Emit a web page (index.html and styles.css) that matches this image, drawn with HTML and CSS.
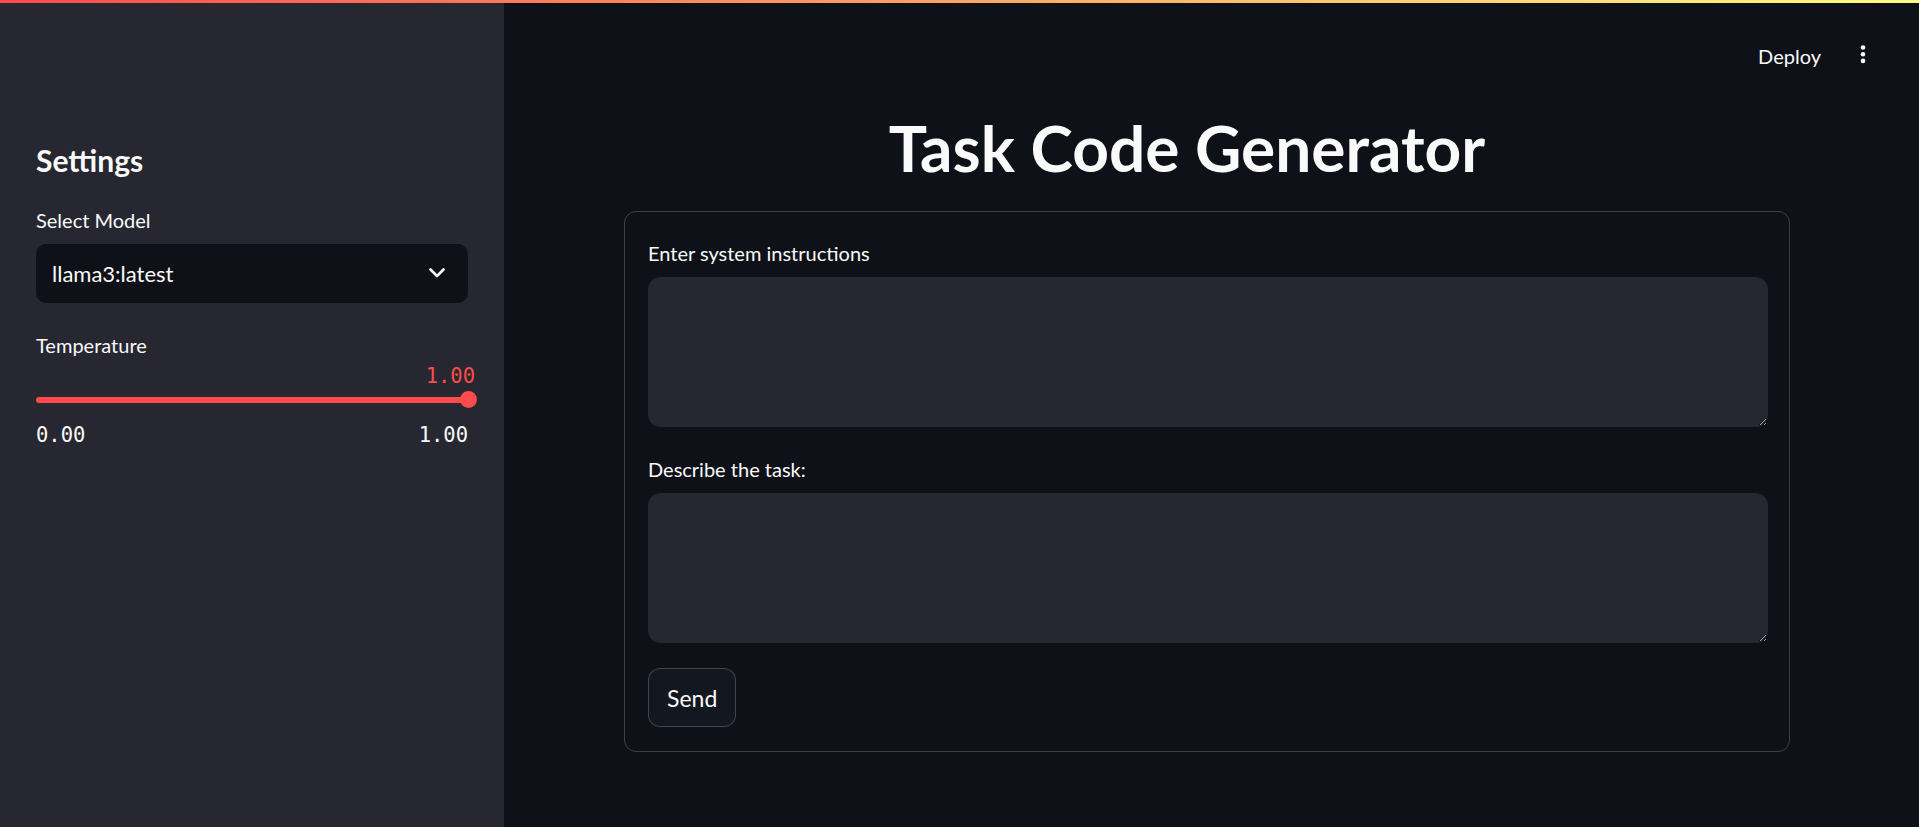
FILE: index.html
```html
<!DOCTYPE html>
<html lang="en">
<head>
<meta charset="utf-8">
<title>Task Code Generator</title>
<link rel="stylesheet" href="styles.css">
</head>
<body>
<div class="decoration"></div>
<div class="app">
  <aside class="sidebar">
    <h2 class="side-title">Settings</h2>
    <div class="widget side-widget">
      <div class="label">Select Model</div>
      <div class="select">
        <span>llama3:latest</span>
        <svg class="chevron" width="16" height="10" viewBox="0 0 16 10"><polyline points="1.5,1.5 8,8 14.5,1.5" fill="none" stroke="#fafafa" stroke-width="2.6" stroke-linecap="round" stroke-linejoin="round"/></svg>
      </div>
    </div>
    <div class="widget side-widget slider">
      <div class="label label-tight">Temperature</div>
      <div class="slider-value">1.00</div>
      <div class="track-area">
        <div class="track"></div>
        <div class="thumb"></div>
      </div>
      <div class="slider-range"><span>0.00</span><span>1.00</span></div>
    </div>
  </aside>
  <main class="main">
    <header class="toolbar">
      <span class="deploy">Deploy</span>
      <button class="menu" type="button" aria-label="Main menu">
        <svg width="24" height="24" viewBox="0 0 24 24"><circle cx="12" cy="3.5" r="2.3" fill="#fafafa"/><circle cx="12" cy="10.2" r="2.3" fill="#fafafa"/><circle cx="12" cy="16.9" r="2.3" fill="#fafafa"/></svg>
      </button>
    </header>
    <div class="block">
      <h1 class="title">Task Code Generator</h1>
      <form class="form">
        <div class="widget">
          <label class="label" for="sys">Enter system instructions</label>
          <textarea id="sys" class="textarea"></textarea>
        </div>
        <div class="widget">
          <label class="label" for="task">Describe the task:</label>
          <textarea id="task" class="textarea"></textarea>
        </div>
        <button class="send" type="button">Send</button>
      </form>
    </div>
  </main>
</div>
</body>
</html>
```

FILE: styles.css
```css
html, body {
  margin: 0;
  height: 100%;
  background: #0e1117;
}

body {
  font-family: Lato, "Noto Sans", sans-serif;
  color: #fafafa;
  overflow: hidden;
}

.decoration {
  position: absolute;
  top: 0;
  left: 0;
  right: 0;
  height: 3px;
  background: linear-gradient(90deg, #ff4b4b, #fffd80);
  z-index: 10;
}

.app {
  display: flex;
  height: 100vh;
}

/* Sidebar */
.sidebar {
  width: 504px;
  flex: none;
  box-sizing: border-box;
  background: #262730;
  padding: 142.4px 36px 0;
  display: flex;
  flex-direction: column;
}

.side-title {
  margin: 0 0 24.2px;
  font-size: 30px;
  font-weight: 700;
  line-height: 36px;
}

.widget {
  display: flex;
  flex-direction: column;
}

.side-widget + .side-widget {
  margin-top: 25.3px;
}

.label {
  display: block;
  font-size: 20px;
  line-height: 30px;
  padding-top: 2px;
  margin-bottom: 9px;
}

.label-tight {
  margin-bottom: 5px;
}

.select {
  height: 59px;
  box-sizing: border-box;
  background: #0e1117;
  border-radius: 10px;
  display: flex;
  align-items: center;
  justify-content: space-between;
  padding: 0 23px 0 16px;
  font-size: 22px;
}

.chevron {
  display: block;
}

.slider-value {
  font-family: "DejaVu Sans Mono", monospace;
  font-size: 20.5px;
  line-height: 22px;
  color: #ff4b4b;
  text-align: right;
  margin-right: -7px;
}

.track-area {
  position: relative;
  height: 26px;
  display: flex;
  align-items: center;
}

.track {
  flex: 1;
  height: 6px;
  border-radius: 3px;
  background: #ff4b4b;
}

.thumb {
  position: absolute;
  right: -8.5px;
  top: 4.5px;
  width: 17px;
  height: 17px;
  border-radius: 50%;
  background: #ff4b4b;
}

.slider-range {
  display: flex;
  justify-content: space-between;
  font-family: "DejaVu Sans Mono", monospace;
  font-size: 20.5px;
  line-height: 22px;
  margin-top: 11px;
}

/* Main */
.main {
  flex: 1;
  min-width: 0;
  display: flex;
  flex-direction: column;
}

.toolbar {
  display: flex;
  justify-content: flex-end;
  align-items: center;
  height: 24px;
  padding: 44px 44.5px 0 0;
}

.deploy {
  font-size: 20px;
  line-height: 24px;
  margin-right: 29.5px;
}

.menu {
  width: 24px;
  height: 24px;
  padding: 0;
  border: 0;
  background: none;
  display: flex;
}

.block {
  padding: 0 129px 0 120px;
}

.title {
  margin: 40.5px 0 0;
  padding-right: 40px;
  font-size: 64px;
  font-weight: 700;
  line-height: 77px;
  text-align: center;
}

.form {
  margin: 25.5px 0 0;
  border: 1px solid rgba(250, 250, 250, 0.2);
  border-radius: 12px;
  padding: 24px 21px 24px 23px;
  display: flex;
  flex-direction: column;
  gap: 25px;
}

.textarea {
  display: block;
  width: 100%;
  height: 150px;
  box-sizing: border-box;
  margin: 0;
  background: #262730;
  border: 1px solid #262730;
  border-radius: 12px;
  color: #fafafa;
  font: 20px Lato, sans-serif;
  padding: 12px 16px;
  resize: vertical;
  color-scheme: dark;
  outline: none;
}

.send {
  align-self: flex-start;
  height: 59px;
  padding: 0 18px;
  border: 1px solid rgba(250, 250, 250, 0.2);
  border-radius: 12px;
  background: #131720;
  color: #fafafa;
  font: 23px Lato, sans-serif;
}
```
